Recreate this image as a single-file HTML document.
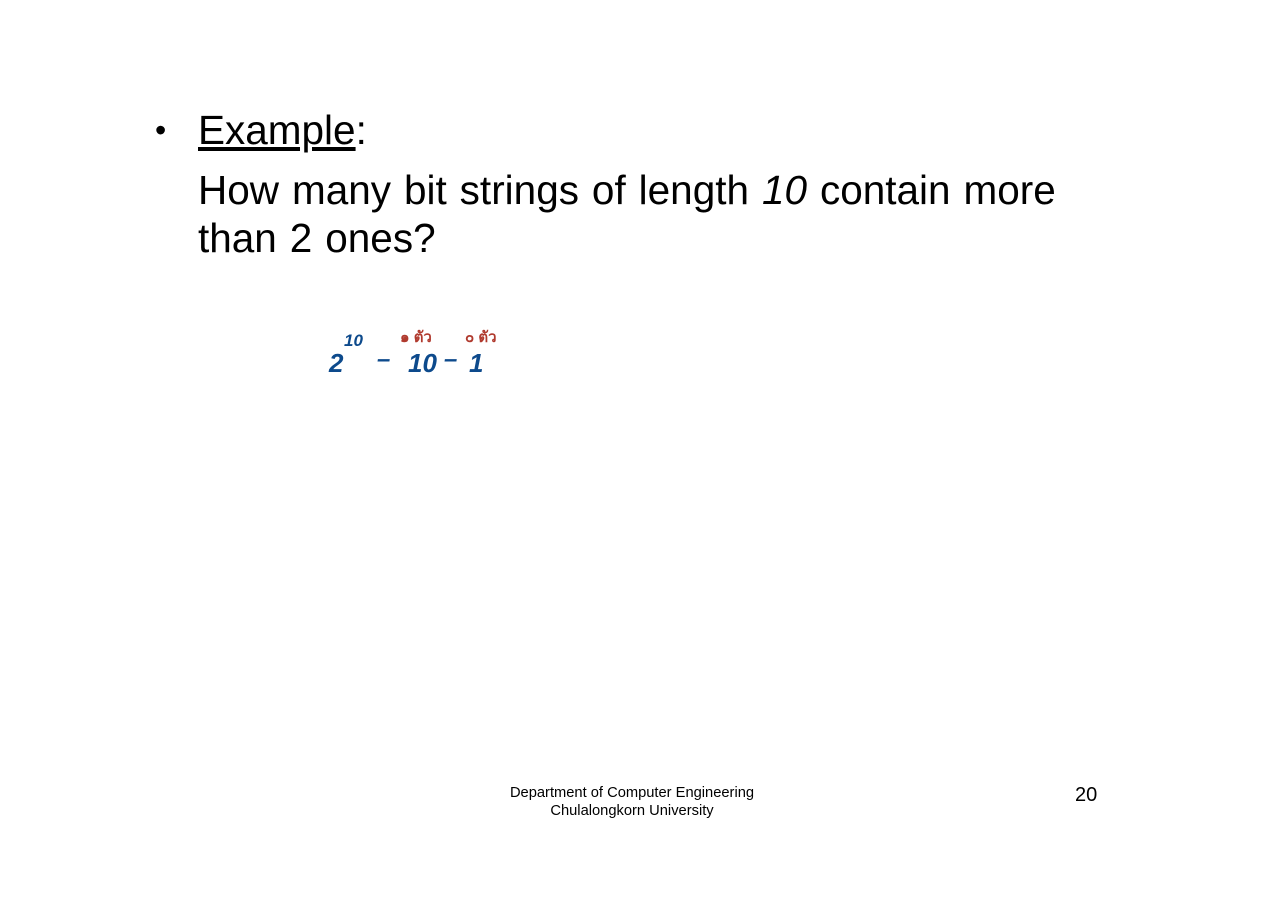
<!DOCTYPE html>
<html><head><meta charset="utf-8"><style>
body{margin:0;width:1264px;height:900px;background:#fff;position:relative;font-family:"Liberation Sans",Arial,sans-serif;color:#000;overflow:hidden}
.a{position:absolute;white-space:nowrap}
.t{font-size:40.5px;line-height:47px}
.h{font-family:"Liberation Sans","Noto Sans CJK SC",sans-serif;font-weight:bold;font-style:italic;color:#0d4a8c}
.r{color:#b03a2e;font-family:"Liberation Sans","Noto Sans CJK SC",sans-serif;font-weight:bold;font-size:15px}
</style></head><body>
<div class="a" style="left:155px;top:110px;font-size:32px;line-height:40px">•</div>
<div class="a t" style="left:198px;top:107px"><u>Example</u>:</div>
<div class="a t" style="left:198px;top:167px;word-spacing:1.7px">How many bit strings of length <i>10</i> contain more</div>
<div class="a t" style="left:198px;top:215px;word-spacing:1.7px">than 2 ones?</div>
<div class="a h" style="left:329px;top:348px;font-size:26px">2</div>
<div class="a h" style="left:344px;top:331px;font-size:17px">10</div>
<div class="a h" style="left:377px;top:346px;font-size:24px">–</div>
<div class="a h" style="left:408px;top:348px;font-size:26px">10</div>
<div class="a h" style="left:444px;top:346px;font-size:24px">–</div>
<div class="a h" style="left:469px;top:348px;font-size:26px">1</div>
<div class="a r" style="left:400px;top:325px">๑ ตัว</div>
<div class="a r" style="left:465px;top:325px">๐ ตัว</div>
<div class="a" style="left:460px;width:344px;text-align:center;top:784px;font-size:14.7px;line-height:18px">Department of Computer Engineering<br>Chulalongkorn University</div>
<div class="a" style="left:1075px;top:784px;font-size:20px">20</div>
</body></html>
